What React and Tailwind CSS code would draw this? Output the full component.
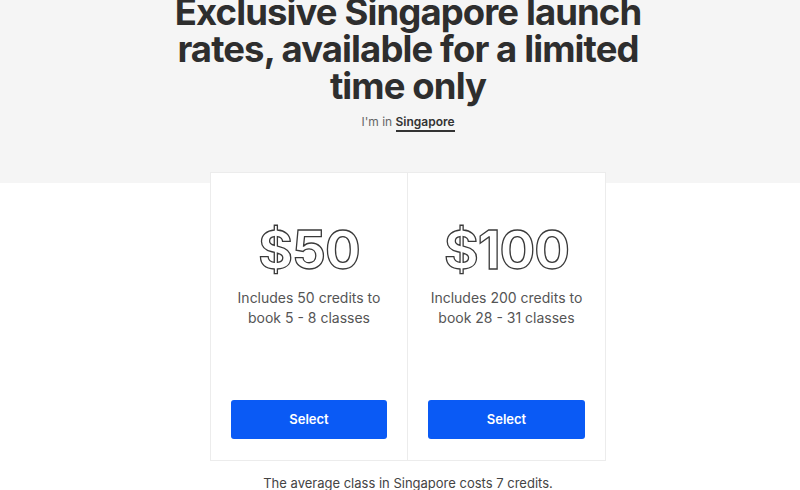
import React from "react";

const plans = [
  { price: "$50", lines: ["Includes 50 credits to", "book 5 - 8 classes"] },
  { price: "$100", lines: ["Includes 200 credits to", "book 28 - 31 classes"] },
];

function PlanCard({ plan, last }) {
  return (
    <div
      className={`flex h-[287px] w-[197px] flex-col items-center bg-white px-5 pb-[21px] pt-[51px] ${
        last ? "" : "border-r border-[#ececec]"
      }`}
    >
      <div className="text-[53px] font-bold leading-[52px] tracking-[-1px] text-transparent [-webkit-text-stroke:1.3px_#3a3a3a]">
        {plan.price}
      </div>
      <p className="mt-[12px] text-center text-[14px] leading-[20px] text-[#555]">
        {plan.lines[0]}
        <br />
        {plan.lines[1]}
      </p>
      <button className="mt-auto h-[39px] w-full rounded-[3px] bg-[#0a5af5] text-[13px] font-semibold text-white">
        Select
      </button>
    </div>
  );
}

export default function App() {
  return (
    <div className="min-h-[490px] w-[800px] overflow-hidden bg-white font-['Inter',sans-serif] text-[#333]">
      <div className="bg-[#f5f5f5] pb-[53px] pl-4 text-center">
        <h1 className="-mt-[6px] text-[36.5px] font-bold leading-[37px] tracking-[-0.9px] text-[#2e2e2e]">
          Exclusive Singapore launch
          <br />
          rates, available for a limited
          <br />
          time only
        </h1>
        <div className="mt-[9px] text-[12px] leading-[16px] text-[#666]">
          I'm in{" "}
          <span className="border-b-2 border-[#333] pb-[1px] font-semibold text-[#333]">Singapore</span>
        </div>
      </div>

      <div className="-mt-[11px] flex justify-center pl-4">
        <div className="flex border border-[#ececec]">
          {plans.map((p, i) => (
            <PlanCard key={p.price} plan={p} last={i === plans.length - 1} />
          ))}
        </div>
      </div>

      <p className="mt-[13px] pl-4 text-center text-[13px] text-[#444]">
        The average class in Singapore costs 7 credits.
      </p>
    </div>
  );
}
